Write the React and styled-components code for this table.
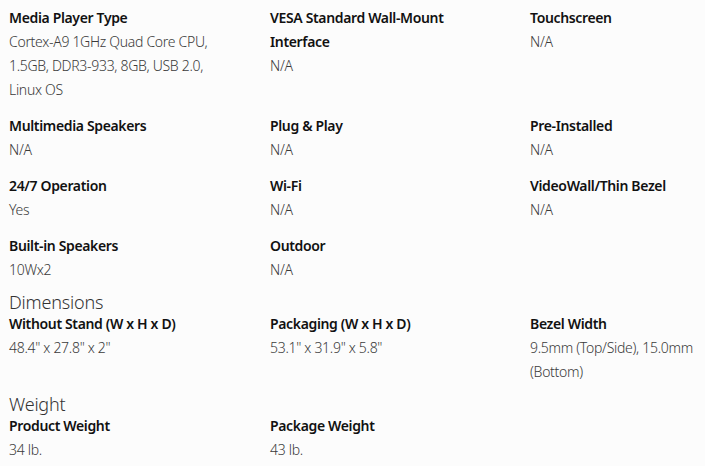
import React from 'react'
import styled, { createGlobalStyle } from 'styled-components'

const GlobalStyle = createGlobalStyle`
  html, body {
    margin: 0;
    padding: 0;
    background: #fcfcfc;
  }
  body {
    font-family: 'Noto Sans', 'Open Sans', sans-serif;
    color: #1a1a1a;
  }
`

const sections = [
  {
    title: null,
    items: [
      { label: 'Media Player Type', value: 'Cortex-A9 1GHz Quad Core CPU, 1.5GB, DDR3-933, 8GB, USB 2.0, Linux OS' },
      { label: 'VESA Standard Wall-Mount Interface', value: 'N/A' },
      { label: 'Touchscreen', value: 'N/A' },
      { label: 'Multimedia Speakers', value: 'N/A' },
      { label: 'Plug & Play', value: 'N/A' },
      { label: 'Pre-Installed', value: 'N/A' },
      { label: '24/7 Operation', value: 'Yes' },
      { label: 'Wi-Fi', value: 'N/A' },
      { label: 'VideoWall/Thin Bezel', value: 'N/A' },
      { label: 'Built-in Speakers', value: '10Wx2' },
      { label: 'Outdoor', value: 'N/A' },
    ],
  },
  {
    title: 'Dimensions',
    items: [
      { label: 'Without Stand (W x H x D)', value: '48.4" x 27.8" x 2"' },
      { label: 'Packaging (W x H x D)', value: '53.1" x 31.9" x 5.8"' },
      { label: 'Bezel Width', value: '9.5mm (Top/Side), 15.0mm (Bottom)' },
    ],
  },
  {
    title: 'Weight',
    items: [
      { label: 'Product Weight', value: '34 lb.' },
      { label: 'Package Weight', value: '43 lb.' },
    ],
  },
]

const Page = styled.div`
  padding: 6px 0 0 9px;
  width: 705px;
  box-sizing: border-box;
`

const Section = styled.section`
  display: flex;
  flex-direction: column;
`

const Heading = styled.h3`
  margin: 10px 0 0;
  font-size: 18px;
  line-height: 20px;
  font-weight: 300;
  letter-spacing: -0.2px;
  color: #333;
`

const Grid = styled.dl`
  margin: 0;
  display: grid;
  grid-template-columns: 221px 220px 1fr;
  column-gap: 40px;
  row-gap: 12px;
`

const Item = styled.div`
  display: flex;
  flex-direction: column;
`

const Label = styled.dt`
  font-size: 14px;
  line-height: 24px;
  font-weight: 600;
  letter-spacing: -0.35px;
  color: #111;
`

const Value = styled.dd`
  margin: 0;
  font-size: 14px;
  line-height: 24px;
  font-weight: 300;
  letter-spacing: -0.3px;
  color: #3a3a3a;
`

export default function App() {
  return (
    <Page>
      <GlobalStyle />
      {sections.map((s, i) => (
        <Section key={i}>
          {s.title && <Heading>{s.title}</Heading>}
          <Grid>
            {s.items.map((it) => (
              <Item key={it.label}>
                <Label>{it.label}</Label>
                <Value>{it.value}</Value>
              </Item>
            ))}
          </Grid>
        </Section>
      ))}
    </Page>
  )
}
